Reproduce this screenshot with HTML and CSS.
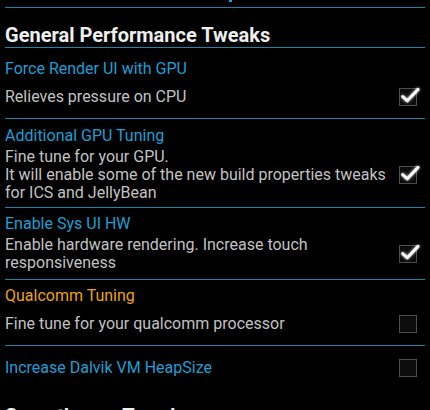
FILE: index.html
```html
<!DOCTYPE html>
<html lang="en">
<head>
    <meta charset="UTF-8">
    <meta name="viewport" content="width=device-width, initial-scale=1.0">
    <title>Performance Tweaks</title>
    <link rel="stylesheet" href="styles.css">
</head>
<body>
    <div class="screen">
        <div class="peek"><span class="peek-mark"></span></div>

        <div class="category">
            <h2 class="category-title">General Performance Tweaks</h2>

            <div class="pref pref-gpu">
                <div class="pref-title">Force Render UI with GPU</div>
                <div class="pref-row pref-row-single">
                    <div class="pref-summary">Relieves pressure on CPU</div>
                    <svg class="check" width="22" height="22" viewBox="0 0 22 22">
                        <rect class="check-box" x="1.5" y="2.5" width="17" height="17"/>
                        <polyline class="check-mark" points="4.7,10.6 9.3,14.8 20,3.4"/>
                    </svg>
                </div>
            </div>

            <div class="pref pref-tuning">
                <div class="pref-title">Additional GPU Tuning</div>
                <div class="pref-row">
                    <div class="pref-summary">Fine tune for your GPU.<br>It will enable some of the new build properties tweaks<br>for ICS and JellyBean</div>
                    <svg class="check" width="22" height="22" viewBox="0 0 22 22">
                        <rect class="check-box" x="1.5" y="2.5" width="17" height="17"/>
                        <polyline class="check-mark" points="4.7,10.6 9.3,14.8 20,3.4"/>
                    </svg>
                </div>
            </div>

            <div class="pref pref-sysui">
                <div class="pref-title">Enable Sys UI HW</div>
                <div class="pref-row">
                    <div class="pref-summary">Enable hardware rendering. Increase touch<br>responsiveness</div>
                    <svg class="check" width="22" height="22" viewBox="0 0 22 22">
                        <rect class="check-box" x="1.5" y="2.5" width="17" height="17"/>
                        <polyline class="check-mark" points="4.7,10.6 9.3,14.8 20,3.4"/>
                    </svg>
                </div>
            </div>

            <div class="pref pref-qualcomm">
                <div class="pref-title pref-title-warn">Qualcomm Tuning</div>
                <div class="pref-row pref-row-single">
                    <div class="pref-summary">Fine tune for your qualcomm processor</div>
                    <svg class="check" width="22" height="22" viewBox="0 0 22 22">
                        <rect class="check-box" x="1.5" y="2.5" width="17" height="17"/>
                    </svg>
                </div>
            </div>

            <div class="pref pref-heap pref-last">
                <div class="pref-row">
                    <div class="pref-title">Increase Dalvik VM HeapSize</div>
                    <svg class="check" width="22" height="22" viewBox="0 0 22 22">
                        <rect class="check-box" x="1.5" y="2.5" width="17" height="17"/>
                    </svg>
                </div>
            </div>
        </div>

        <div class="category category-next">
            <h2 class="category-title">Smoothness Tweaks</h2>
        </div>
    </div>
</body>
</html>
```

FILE: styles.css
```css
html, body {
    margin: 0;
    padding: 0;
    background-color: #000;
}
body {
    font-family: Roboto, "Noto Sans", sans-serif;
    color: #bdbdbd;
    overflow: hidden;
    height: 410px;
}
.screen {
    padding: 0 5px;
}
.peek {
    height: 7px;
    border-bottom: 1px solid #1b86ab;
}
.peek-mark {
    display: block;
    width: 3px;
    height: 2px;
    margin-left: 224px;
    background-color: #1fa3d6;
}
.category-title {
    margin: 0;
    padding-top: 15px;
    font-size: 20px;
    line-height: 24px;
    font-weight: bold;
    color: #eeeeee;
    border-bottom: 1px solid #1b86ab;
}
.category-next .category-title {
    padding-top: 18px;
}
.pref {
    border-bottom: 1px solid #1b86ab;
}
.pref-title {
    font-size: 16px;
    line-height: 18px;
    color: #1c9fd4;
}
.pref-title-warn {
    color: #eba40c;
}
.pref-row {
    display: flex;
    align-items: center;
    justify-content: space-between;
    margin-top: 3px;
}
.pref-row-single {
    margin-top: 10px;
}
.pref-summary {
    font-size: 16px;
    line-height: 18px;
    color: #c2c2c2;
    white-space: nowrap;
}
.check {
    display: block;
    flex: none;
    margin: -2px 5px -2px 0;
    overflow: visible;
}
.check-box {
    fill: #0c0c0c;
    stroke: #4c4c4c;
    stroke-width: 1;
}
.check-mark {
    fill: none;
    stroke: #ffffff;
    stroke-width: 3;
    stroke-linecap: round;
    stroke-linejoin: round;
    filter: drop-shadow(0 0 1.5px rgba(255, 255, 255, 0.8));
}

/* per-row spacing, as measured */
.pref-gpu {
    padding: 12px 0 12px;
}
.pref-tuning {
    padding: 8px 0 5px;
}
.pref-sysui {
    padding: 7px 0 7px;
}
.pref-qualcomm {
    padding: 7px 0 12px;
}
.pref-heap {
    padding: 13px 0 9px;
}
.pref-heap .pref-row {
    margin-top: 0;
}
.pref-last {
    border-bottom: none;
}
```
